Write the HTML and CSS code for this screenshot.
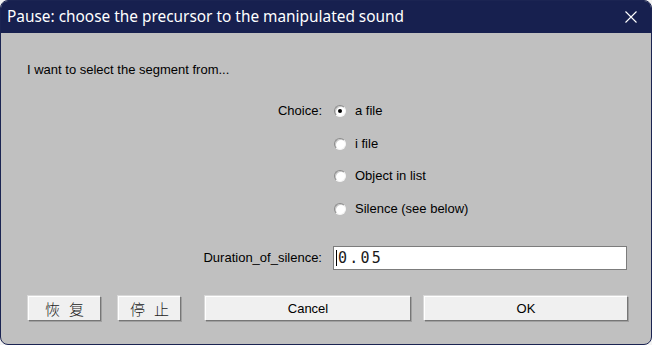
FILE: index.html
```html
<!DOCTYPE html>
<html lang="en">
<head>
<meta charset="utf-8">
<title>Pause</title>
<link rel="stylesheet" href="styles.css">
</head>
<body>
<div class="window">
  <div class="titlebar">
    <span class="title">Pause: choose the precursor to the manipulated sound</span>
    <span class="close" aria-label="Close">
      <svg width="12" height="12" viewBox="0 0 12 12"><path d="M0.5 0.5 L11.5 11.5 M11.5 0.5 L0.5 11.5" stroke="#ffffff" stroke-width="1.1" fill="none"/></svg>
    </span>
  </div>
  <div class="content">
    <p class="intro">I want to select the segment from...</p>
    <div class="form">
      <div class="label choice-label">Choice:</div>
      <div class="radios">
        <div class="radio-row"><span class="radio checked"></span><span class="rtext">a file</span></div>
        <div class="radio-row"><span class="radio"></span><span class="rtext">i file</span></div>
        <div class="radio-row"><span class="radio"></span><span class="rtext">Object in list</span></div>
        <div class="radio-row"><span class="radio"></span><span class="rtext">Silence (see below)</span></div>
      </div>
      <div class="label dur-label">Duration_of_silence:</div>
      <div class="field"><span class="caret"></span><span class="value">0.05</span></div>
    </div>
    <div class="buttons">
      <div class="btn btn-revert"><span class="cjk">恢复</span></div>
      <div class="btn btn-stop"><span class="cjk">停止</span></div>
      <div class="btn btn-cancel">Cancel</div>
      <div class="btn btn-ok">OK</div>
    </div>
  </div>
</div>
</body>
</html>
```

FILE: styles.css
```css
html, body {
  margin: 0;
  padding: 0;
  background: #f3f3f3;
}
body {
  width: 652px;
  height: 345px;
  overflow: hidden;
  font-family: "Liberation Sans", Arial, sans-serif;
  font-size: 13px;
  color: #000;
}
.window {
  box-sizing: border-box;
  width: 652px;
  height: 345px;
  border: 1px solid #1b2452;
  border-radius: 8px;
  overflow: hidden;
  background: #c0c0c0;
  display: flex;
  flex-direction: column;
}
.titlebar {
  height: 32px;
  flex: 0 0 32px;
  background: #17204f;
  color: #ffffff;
  display: flex;
  align-items: center;
  justify-content: space-between;
  padding: 0 14px 0 6px;
}
.title {
  font-family: "Noto Sans", "Open Sans", sans-serif;
  font-size: 15.4px;
  position: relative;
  top: -1px;
}
.close {
  display: flex;
  width: 12px;
  height: 12px;
}
.content {
  flex: 1;
  padding: 29px 0 0 26px;
}
.intro {
  margin: 0;
  line-height: 16px;
  height: 16px;
}
.form {
  margin-top: 17px;
  display: grid;
  grid-template-columns: 295px 294px;
  column-gap: 11px;
}
.label {
  text-align: right;
  line-height: 16px;
}
.choice-label {
  padding-top: 8px;
}
.radios {
  display: flex;
  flex-direction: column;
}
.radio-row {
  height: 32.5px;
  display: flex;
  align-items: center;
}
.radio {
  box-sizing: border-box;
  width: 12px;
  height: 12px;
  margin-left: 1px;
  margin-right: 9px;
  border-radius: 50%;
  background: #ffffff;
  border: 1px solid;
  border-color: #8a8a8a #f4f4f4 #f4f4f4 #8a8a8a;
  box-shadow: inset 1px 1px 0 #c8c8c8;
  display: flex;
  align-items: center;
  justify-content: center;
}
.radio.checked::after {
  content: "";
  width: 4px;
  height: 4px;
  border-radius: 50%;
  background: #000;
}
.rtext {
  line-height: 16px;
}
.dur-label {
  margin-top: 21px;
  line-height: 24px;
}
.field {
  margin-top: 21px;
  box-sizing: border-box;
  height: 24px;
  background: #ffffff;
  border: 1px solid #7c7c7c;
  display: flex;
  align-items: center;
  padding-left: 2px;
}
.caret {
  width: 1px;
  height: 16px;
  background: #000;
  margin-right: 1px;
}
.value {
  font-family: "DejaVu Sans Mono", "Liberation Mono", monospace;
  font-size: 15px;
  letter-spacing: 2.2px;
  color: #1a1a1a;
}
.buttons {
  margin-top: 26px;
  display: flex;
  align-items: flex-start;
  padding-left: 1px;
}
.btn {
  box-sizing: border-box;
  height: 25px;
  background: #f0f0f0;
  border: 1px solid;
  border-color: #ffffff #767676 #767676 #ffffff;
  box-shadow: 1px 1px 0 #a0a0a0, -1px -1px 0 #d8d8d8;
  display: flex;
  align-items: center;
  justify-content: center;
  line-height: 16px;
}
.cjk {
  font-family: "Noto Sans CJK SC", sans-serif;
  font-size: 15px;
  font-weight: 300;
  letter-spacing: 9px;
  padding-left: 9px;
  color: #222;
}
.btn-revert { width: 73px; }
.btn-stop { width: 63px; margin-left: 17px; }
.btn-cancel { width: 206px; margin-left: 24px; }
.btn-ok { width: 204px; margin-left: 13px; }
```
